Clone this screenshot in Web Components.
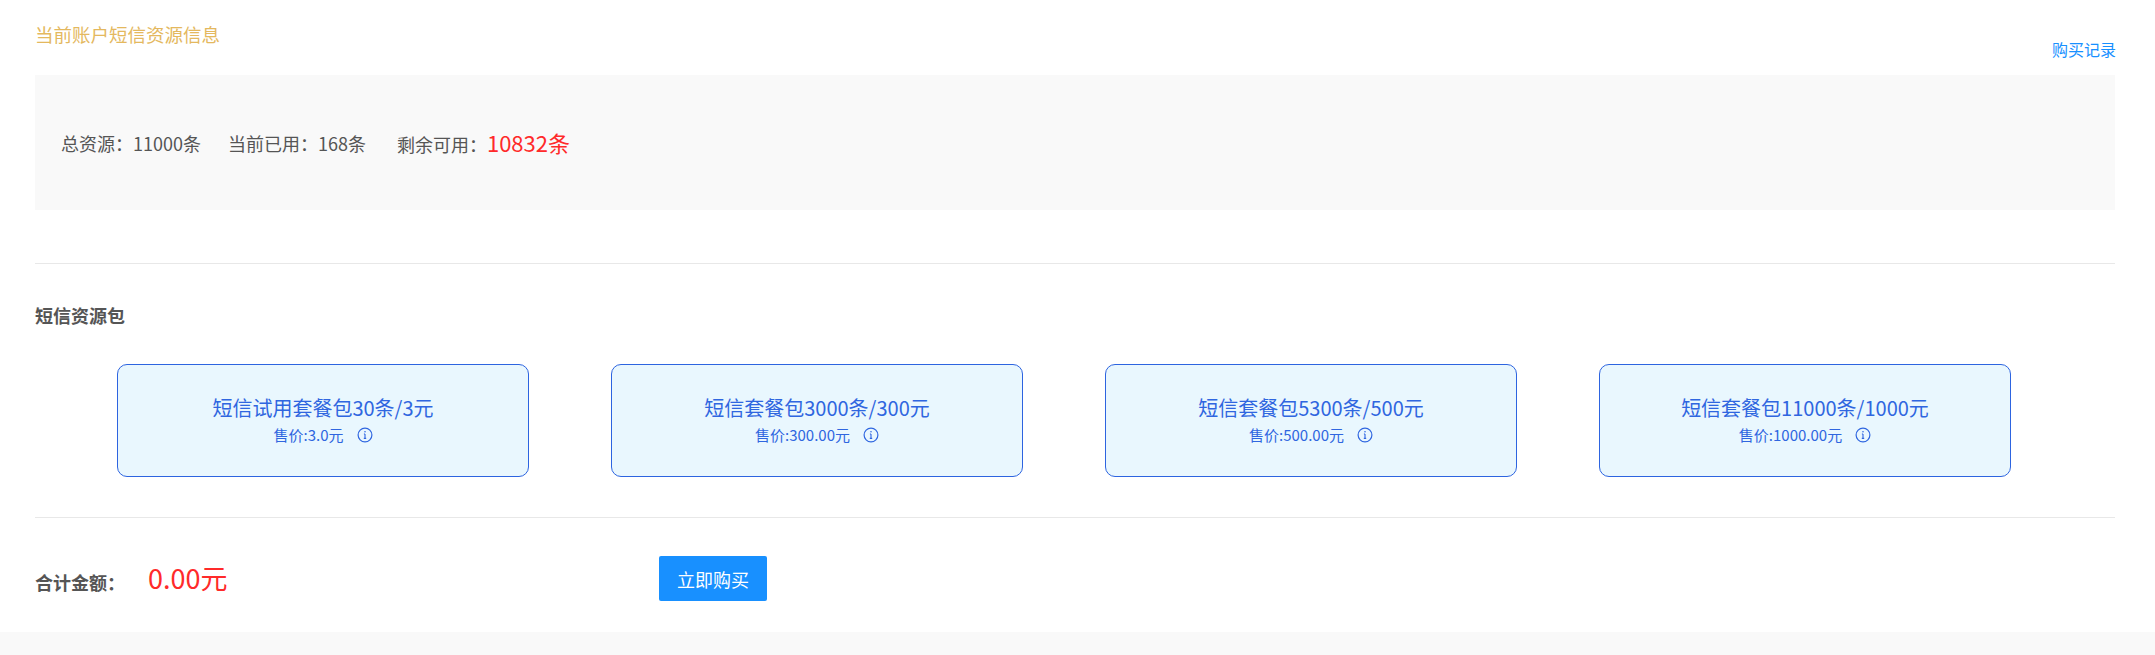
<!DOCTYPE html>
<html lang="zh-CN">
<head>
<meta charset="utf-8">
<title>短信资源</title>
<style>
html,body{margin:0;padding:0;background:#f9f9f9;}
body{font-family:"Noto Sans CJK SC","Noto Sans",sans-serif;color:#555;}
</style>
</head>
<body>
<sms-page>
  <sms-header title-text="当前账户短信资源信息" link-text="购买记录"></sms-header>
  <sms-stats>
    <sms-stat label="总资源：" value="11000条"></sms-stat>
    <sms-stat label="当前已用：" value="168条"></sms-stat>
    <sms-stat label="剩余可用：" value="10832条" accent></sms-stat>
  </sms-stats>
  <sms-divider style="margin-top:53px"></sms-divider>
  <sms-heading>短信资源包</sms-heading>
  <sms-packages>
    <sms-package name="短信试用套餐包30条/3元" price="售价:3.0元"></sms-package>
    <sms-package name="短信套餐包3000条/300元" price="售价:300.00元"></sms-package>
    <sms-package name="短信套餐包5300条/500元" price="售价:500.00元"></sms-package>
    <sms-package name="短信套餐包11000条/1000元" price="售价:1000.00元"></sms-package>
  </sms-packages>
  <sms-divider style="margin-top:40px"></sms-divider>
  <sms-total label="合计金额：" amount="0.00元" action="立即购买"></sms-total>
</sms-page>
<script>
function def(name, css, html, init){
  customElements.define(name, class extends HTMLElement{
    constructor(){
      super();
      const r=this.attachShadow({mode:'open'});
      r.innerHTML='<style>'+css+'</style>'+html;
    }
    connectedCallback(){
      if(init) init(this,this.shadowRoot);
    }
  });
}
def('sms-page',
 ':host{display:block;box-sizing:border-box;height:632px;background:#fff;padding:0 40px 0 35px;font-family:"Noto Sans CJK SC","Noto Sans",sans-serif;color:#555;}',
 '<slot></slot>');
def('sms-header',
 ':host{display:flex;justify-content:space-between;height:75px;box-sizing:border-box;padding-top:22px;}'+
 '.t{font-size:18.5px;line-height:24px;color:#e4b85e;}'+
 '.l{align-self:flex-end;font-size:16px;line-height:22px;color:#1890ff;margin-bottom:15px;margin-right:-1px;}',
 '<span class="t"></span><span class="l"></span>',
 (h,r)=>{r.querySelector('.t').textContent=h.getAttribute('title-text');r.querySelector('.l').textContent=h.getAttribute('link-text');});
def('sms-stats',
 ':host{display:flex;align-items:center;gap:27px;height:135px;box-sizing:border-box;padding-left:26px;background:#f9f9f9;}',
 '<slot></slot>');
def('sms-stat',
 ':host{display:inline-flex;align-items:baseline;font-size:18px;line-height:30px;color:#555;}'+
 ':host([accent]){margin-left:4px;}'+
 ':host([accent]) .v{font-size:22px;color:#ff2a2a;}',
 '<span class="k"></span><span class="v"></span>',
 (h,r)=>{r.querySelector('.k').textContent=h.getAttribute('label');r.querySelector('.v').textContent=h.getAttribute('value');});
def('sms-divider',':host{display:block;height:1px;background:#e8e8e8;}','');
def('sms-heading',
 ':host{display:block;font-size:18px;font-weight:700;line-height:24px;color:#555;margin-top:39px;}',
 '<slot></slot>');
def('sms-packages',
 ':host{display:flex;gap:82px;padding-left:82px;margin-top:37px;}',
 '<slot></slot>');
def('sms-package',
 ':host{display:flex;flex-direction:column;align-items:center;justify-content:center;box-sizing:border-box;width:412px;height:113px;background:#e9f7fe;border:1px solid #2d64e0;border-radius:10px;color:#2f66e0;}'+
 '.n{font-size:20px;line-height:28px;}'+
 '.p{display:flex;align-items:center;gap:13px;font-size:15px;line-height:24px;margin-top:1px;}'+
 'svg{width:16px;height:16px;display:block;}',
 '<div class="n"></div><div class="p"><span class="a"></span><svg viewBox="0 0 16 16" fill="none" stroke="#2f66e0"><circle cx="8" cy="8" r="6.9" stroke-width="1.2"/><path d="M8 7v4.4M6.8 11.4h2.4M6.9 7h1.1" stroke-width="1.1"/><circle cx="8" cy="4.8" r=".8" fill="#2f66e0" stroke="none"/></svg></div>',
 (h,r)=>{r.querySelector('.n').textContent=h.getAttribute('name');r.querySelector('.a').textContent=h.getAttribute('price');});
def('sms-total',
 ':host{display:flex;align-items:center;margin-top:38px;height:45px;}'+
 '.k{font-size:18px;font-weight:700;color:#555;width:113px;margin-top:7px;line-height:24px;}'+
 '.v{font-size:27px;line-height:36px;color:#ff2a2a;width:511px;margin-top:-1px;}',
 '<span class="k"></span><span class="v"></span><sms-button></sms-button>',
 (h,r)=>{r.querySelector('.k').textContent=h.getAttribute('label');r.querySelector('.v').textContent=h.getAttribute('amount');r.querySelector('sms-button').textContent=h.getAttribute('action');});
def('sms-button',
 ':host{display:flex;align-items:center;justify-content:center;box-sizing:border-box;width:108px;height:45px;background:#1890ff;border-radius:2px;color:#fff;font-size:18px;}',
 '<slot></slot>');
</script>
</body>
</html>
